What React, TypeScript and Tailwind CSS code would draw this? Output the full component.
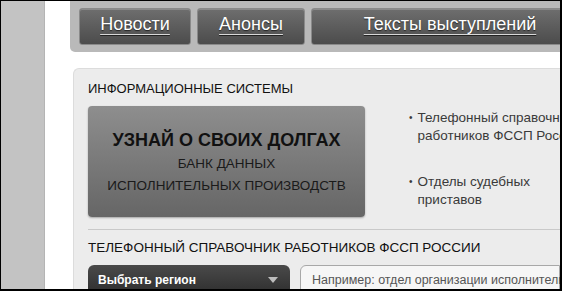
import React from 'react';

const font = { fontFamily: '"Liberation Sans", Arial, sans-serif' };

function NavButton({ label, className }: { label: string; className: string }) {
  return (
    <div
      className={`flex h-[37px] shrink-0 items-center justify-center rounded-[3px] border border-[#8a8a8a] bg-gradient-to-b from-[#6e6e6e] to-[#4c4c4c] pb-[5px] shadow-[inset_0_1px_0_rgba(255,255,255,0.2)] ${className}`}
    >
      <span className="text-[18px] leading-none text-white underline decoration-[#d8d8d8] underline-offset-[4px] [text-shadow:0_1px_1px_rgba(0,0,0,0.6)]">
        {label}
      </span>
    </div>
  );
}

function Bullet({ lines }: { lines: string[] }) {
  return (
    <div className="flex gap-[5px] text-[13.5px] leading-[18px] text-[#3a3a3a]">
      <span className="text-[10px] leading-[18px]">•</span>
      <div className="whitespace-nowrap">
        {lines.map((l) => (
          <div key={l}>{l}</div>
        ))}
      </div>
    </div>
  );
}

export default function App() {
  return (
    <div
      className="h-[291px] w-[562px] overflow-hidden border-t border-r-2 border-b-2 border-l border-black bg-white"
      style={font}
    >
      <div className="flex h-full">
        <div className="w-[44px] shrink-0 border-r border-[#b4b4b4] bg-[#c3c3c3]" />
        <div className="w-[25px] shrink-0 bg-white" />
        <div className="flex min-w-0 flex-1 flex-col">
          <div className="flex h-[51px] shrink-0 gap-[6px] overflow-hidden rounded-bl-[5px] bg-[#b9b9b9] pl-[9px] pt-[7px]">
            <NavButton label="Новости" className="w-[112px]" />
            <NavButton label="Анонсы" className="w-[108px]" />
            <NavButton label="Тексты выступлений" className="w-[300px] pr-[22px]" />
          </div>

          <div className="ml-[3px] mt-[16px] flex-1 rounded-tl-[6px] border-l border-t border-[#dcdcdc] bg-[#ececec] pl-[14px] pt-[12px]">
            <div className="text-[13px] leading-[16px] text-[#111]">ИНФОРМАЦИОННЫЕ СИСТЕМЫ</div>

            <div className="mt-[9px] flex">
              <div className="flex h-[111px] w-[277px] shrink-0 flex-col items-center justify-center rounded-[4px] bg-gradient-to-b from-[#8e8e8e] to-[#666666] pt-[4px] shadow-[0_1px_2px_rgba(0,0,0,0.3)]">
                <div className="text-[18px] font-bold leading-[20px] text-[#111]">УЗНАЙ О СВОИХ ДОЛГАХ</div>
                <div className="mt-[3px] text-center text-[13.5px] leading-[22px] text-[#1a1a1a]">
                  <div>БАНК ДАННЫХ</div>
                  <div>ИСПОЛНИТЕЛЬНЫХ ПРОИЗВОДСТВ</div>
                </div>
              </div>

              <div className="ml-[44px] flex flex-col gap-[28px] pt-[3px]">
                <Bullet lines={['Телефонный справочник', 'работников ФССП России']} />
                <Bullet lines={['Отделы судебных', 'приставов']} />
              </div>
            </div>

            <div className="mt-[12px] border-t border-[#c9c9c9]" />

            <div className="mt-[10px] whitespace-nowrap text-[13.5px] leading-[16px] text-[#111]">
              ТЕЛЕФОННЫЙ СПРАВОЧНИК РАБОТНИКОВ ФССП РОССИИ
            </div>

            <div className="mt-[9px] flex gap-[10px]">
              <div className="flex h-[30px] w-[202px] shrink-0 items-center justify-between rounded-[6px] bg-gradient-to-b from-[#4a4a4a] to-[#2e2e2e] pl-[10px] pr-[12px]">
                <span className="text-[12px] font-bold text-white">Выбрать регион</span>
                <svg width="10" height="6" viewBox="0 0 10 6">
                  <path d="M0 0h10L5 6z" fill="#bdbdbd" />
                </svg>
              </div>
              <div className="flex h-[30px] min-w-0 flex-1 items-center rounded-l-[6px] border border-[#a8a8a8] bg-[#f6f6f6] pl-[11px]">
                <span className="whitespace-nowrap text-[12.5px] text-[#555]">
                  Например: отдел организации исполнительного производства
                </span>
              </div>
            </div>
          </div>
        </div>
      </div>
    </div>
  );
}
